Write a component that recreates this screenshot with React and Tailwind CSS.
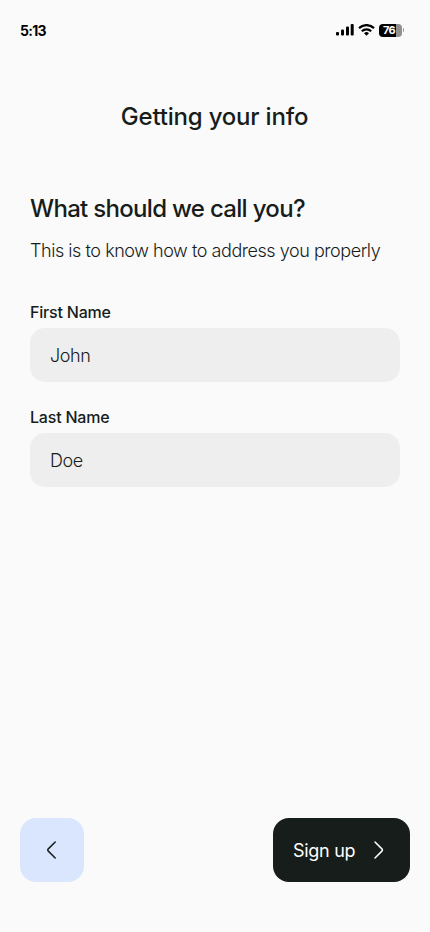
import { useState } from 'react'

const FIELDS = [
  { id: 'firstName', label: 'First Name' },
  { id: 'lastName', label: 'Last Name' },
]

function StatusBar() {
  return (
    <header className="flex h-[60px] items-center justify-between pl-5 pr-[26px] text-black">
      <span className="pt-0.5 text-[14px] font-bold leading-5 tracking-[-0.7px]">5:13</span>
      <div className="flex items-center gap-1">
        <svg className="h-3 w-[18px]" viewBox="0 0 18 12" fill="currentColor">
          <rect x="0" y="8" width="3" height="3.5" rx="1" />
          <rect x="5" y="5.5" width="3" height="6" rx="1" />
          <rect x="10" y="2.5" width="3" height="9" rx="1" />
          <rect x="14.7" y="0" width="3" height="11.5" rx="1" />
        </svg>
        <svg className="h-3 w-[17px]" viewBox="0 0 17 12" fill="none" stroke="currentColor" strokeWidth="2.2">
          <path d="M1 4.1a10.8 10.8 0 0 1 15 0" />
          <path d="M3.8 7.2a6.8 6.8 0 0 1 9.4 0" />
          <path d="M8.5 11.7 6 9.3a3.6 3.6 0 0 1 5 0z" fill="currentColor" stroke="none" />
        </svg>
        <div className="flex items-center gap-px">
          <div className="flex h-[13px] w-[23px] items-center justify-center rounded-[4px] bg-linear-to-r from-black from-74% to-[#8f8f8f] to-74% pr-0.5 text-[11px] font-bold leading-[13px] tracking-[-0.7px] text-white">76</div>
          <span className="h-1 w-[1.5px] rounded-r bg-[#999]" />
        </div>
      </div>
    </header>
  )
}

export default function App() {
  const [form, setForm] = useState({ firstName: 'John', lastName: 'Doe' })

  return (
    <div className="flex h-screen flex-col bg-[#fafafa] font-['Inter',sans-serif] text-[#161d1b]">
      <StatusBar />
      <h1 className="mt-[41px] pr-px text-center text-[24px] font-medium leading-8 tracking-[-0.2px]">Getting your info</h1>
      <main className="px-[30px] pt-[60px]">
        <h2 className="text-[24px] font-medium leading-8 tracking-[-0.69px]">What should we call you?</h2>
        <p className="mt-[14px] mb-[37px] whitespace-nowrap text-[18px] font-light leading-6 tracking-[-0.45px]">This is to know how to address you properly</p>
        <div className="flex flex-col gap-[23px]">
          {FIELDS.map(({ id, label }) => (
            <label key={id} className="block">
              <span className="mb-1 block text-[16px] font-medium leading-6 tracking-[-0.2px]">{label}</span>
              <input
                className="block h-[54px] w-full rounded-[15px] bg-[#eee] px-5 text-[18px] font-light tracking-[-0.4px] outline-none"
                value={form[id]}
                onChange={e => setForm({ ...form, [id]: e.target.value })}
              />
            </label>
          ))}
        </div>
      </main>
      <footer className="mt-auto flex justify-between px-5 pb-[50px]">
        <button className="flex size-16 items-center justify-center rounded-[16px] bg-[#dae6fd]" aria-label="Back">
          <svg className="h-5 w-3" viewBox="0 0 12 20" fill="none" stroke="currentColor" strokeWidth="1.5" strokeLinecap="round" strokeLinejoin="round">
            <path d="M9.2 2 2.3 8.9q-1.1 1.1 0 2.2L9.2 18" />
          </svg>
        </button>
        <button className="flex h-16 w-[137px] items-center justify-between rounded-[16px] bg-[#161d1b] pl-5 pr-[25px] text-[18px] tracking-[-0.3px] text-white">
          Sign up
          <svg className="h-5 w-3" viewBox="0 0 12 20" fill="none" stroke="currentColor" strokeWidth="1.5" strokeLinecap="round" strokeLinejoin="round">
            <path d="m2 2 6.9 6.9q1.1 1.1 0 2.2L2 18" />
          </svg>
        </button>
      </footer>
    </div>
  )
}
